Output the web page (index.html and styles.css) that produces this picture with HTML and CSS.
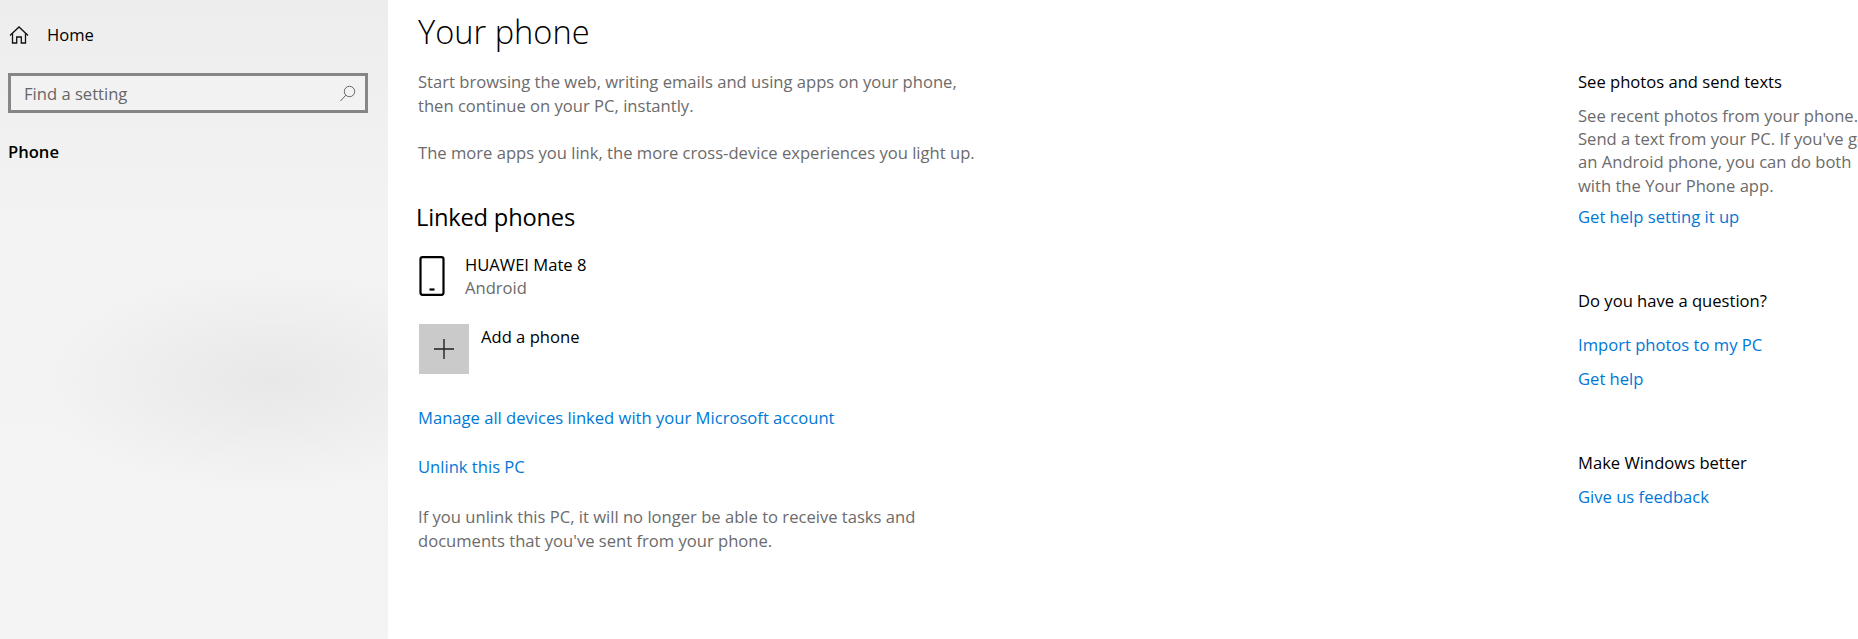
FILE: index.html
```html
<!DOCTYPE html>
<html lang="en">
<head>
    <meta charset="UTF-8">
    <title>Your phone</title>
    <link rel="stylesheet" href="styles.css">
</head>
<body>
    <div class="window">
        <aside class="sidebar">
            <div class="home">
                <svg class="home-icon" width="20" height="20" viewBox="0 0 20 20" fill="none" stroke="#111" stroke-width="1.3">
                    <path d="M1 10.5 10 2l9 8.5"/>
                    <path d="M3.5 8.5V18h4.2v-6h4.6v6h4.2V8.5"/>
                </svg>
                <span>Home</span>
            </div>
            <div class="search">
                <span>Find a setting</span>
                <svg width="17" height="17" viewBox="0 0 17 17" fill="none" stroke="#666" stroke-width="1">
                    <circle cx="10.5" cy="6.5" r="5.2"/>
                    <path d="M6.8 10.2 1.5 16"/>
                </svg>
            </div>
            <div class="nav-title">Phone</div>
        </aside>

        <main class="content">
            <h1>Your phone</h1>
            <p class="muted intro">Start browsing the web, writing emails and using apps on your phone,<br>then continue on your PC, instantly.</p>
            <p class="muted more">The more apps you link, the more cross-device experiences you light up.</p>

            <h2>Linked phones</h2>
            <div class="device">
                <svg class="device-icon" width="26" height="40" viewBox="0 0 26 40" fill="none" stroke="#000" stroke-width="2.2">
                    <rect x="1.5" y="1.2" width="23" height="37.6" rx="2"/>
                    <path d="M10.5 33.5h5"/>
                </svg>
                <div class="device-text">
                    <div>HUAWEI Mate 8</div>
                    <div class="muted">Android</div>
                </div>
            </div>
            <div class="add-phone">
                <div class="add-tile">
                    <svg width="22" height="22" viewBox="0 0 22 22" stroke="#222" stroke-width="1.4">
                        <path d="M11 1v20M1 11h20"/>
                    </svg>
                </div>
                <span>Add a phone</span>
            </div>

            <a class="link manage" href="#">Manage all devices linked with your Microsoft account</a>
            <a class="link unlink" href="#">Unlink this PC</a>
            <p class="muted warning">If you unlink this PC, it will no longer be able to receive tasks and<br>documents that you've sent from your phone.</p>
        </main>

        <section class="side-panel">
            <h3>See photos and send texts</h3>
            <p class="muted panel-text">See recent photos from your phone.<br>Send a text from your PC. If you've got<br>an Android phone, you can do both<br>with the Your Phone app.</p>
            <a class="link setup" href="#">Get help setting it up</a>

            <h3 class="question">Do you have a question?</h3>
            <a class="link import" href="#">Import photos to my PC</a>
            <a class="link get-help" href="#">Get help</a>

            <h3 class="better">Make Windows better</h3>
            <a class="link feedback" href="#">Give us feedback</a>
        </section>
    </div>
</body>
</html>
```

FILE: styles.css
```css
html, body {
    margin: 0;
    height: 100%;
    overflow: hidden;
}
body {
    font-family: "Open Sans", "Noto Sans", sans-serif;
    font-size: 16.6px;
    line-height: 23.5px;
    color: #000;
    background: #fff;
}
.window {
    display: flex;
    width: 1858px;
    height: 639px;
}
.sidebar {
    width: 388px;
    flex: none;
    padding: 0 8px;
    box-sizing: border-box;
    background:
        radial-gradient(ellipse 230px 110px at 270px 380px, #e8e8e8, rgba(232, 232, 232, 0)),
        linear-gradient(#ededed, #f3f3f3 35%, #f4f4f4);
}
.home {
    display: flex;
    align-items: center;
    gap: 18px;
    height: 24px;
    margin-top: 23px;
    padding-left: 1px;
}
.search {
    display: flex;
    align-items: center;
    justify-content: space-between;
    width: 360px;
    height: 40px;
    box-sizing: border-box;
    margin-top: 26px;
    padding: 0 9px 0 13px;
    border: 3px solid #868686;
    background: #f2f2f2;
    color: #666;
}
.search span {
    padding-top: 2px;
}
.nav-title {
    margin-top: 27px;
    font-weight: 600;
}
.content {
    width: 1161px;
    flex: none;
    padding-left: 30px;
    box-sizing: border-box;
}
h1 {
    margin: 9px 0 0;
    font-size: 32.6px;
    line-height: 46px;
    font-weight: 300;
}
h2 {
    margin: 36px 0 0 -2px;
    font-size: 23.7px;
    line-height: 32px;
    font-weight: 400;
    letter-spacing: -0.2px;
}
h3 {
    margin: 0;
    font-size: 16.6px;
    line-height: 24px;
    font-weight: 400;
}
p {
    margin: 0;
}
.muted {
    color: #6b6b6b;
}
.intro {
    margin-top: 15px;
}
.more {
    margin-top: 24px;
}
.device {
    display: flex;
    align-items: center;
    gap: 20px;
    margin-top: 20px;
}
.device-icon {
    margin-left: 1px;
}
.add-phone {
    display: flex;
    align-items: flex-start;
    gap: 12px;
    margin: 24px 0 0 1px;
    line-height: 26px;
}
.add-tile {
    width: 50px;
    height: 50px;
    display: flex;
    align-items: center;
    justify-content: center;
    background: #cacaca;
}
.link {
    display: block;
    color: #0078d7;
    text-decoration: none;
}
.manage {
    margin-top: 32px;
}
.unlink {
    margin-top: 26px;
}
.warning {
    margin-top: 26px;
    line-height: 24px;
}
.side-panel {
    width: 309px;
    flex: none;
    padding: 70px 0 0 29px;
    box-sizing: border-box;
    white-space: nowrap;
}
.panel-text {
    margin-top: 10px;
    line-height: 23.2px;
}
.setup {
    margin-top: 8px;
}
.question {
    margin-top: 61px;
}
.import {
    margin-top: 20px;
}
.get-help {
    margin-top: 10px;
}
.better {
    margin-top: 61px;
}
.feedback {
    margin-top: 10px;
}
```
